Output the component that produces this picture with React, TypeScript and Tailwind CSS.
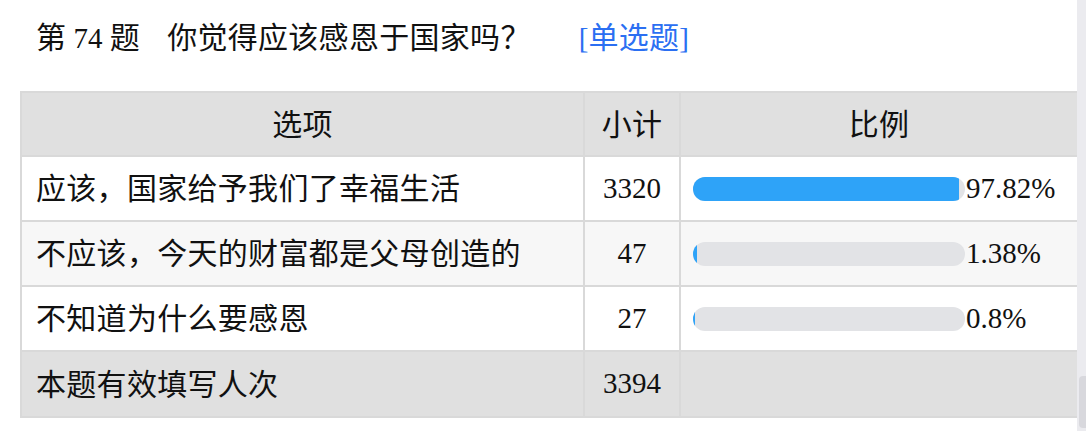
const rows = [
  { label: "应该，国家给予我们了幸福生活", count: 3320, pct: 97.82, bg: "bg-white" },
  { label: "不应该，今天的财富都是父母创造的", count: 47, pct: 1.38, bg: "bg-[#f7f7f7]" },
  { label: "不知道为什么要感恩", count: 27, pct: 0.8, bg: "bg-white" },
];

const font = "font-['Liberation_Serif','Noto_Sans_CJK_SC',serif]";
// CJK glyphs run a bit wider than the Latin ones in the original
const cjk = "text-[30px] tracking-[0.3px]";

export default function App() {
  return (
    <div className={`flex h-[431px] w-[1086px] overflow-hidden bg-white text-[#111] ${font}`}>
      <div className="flex-1 pl-5">
        <div className="flex h-[91px] items-start pl-4 pt-[20px] text-[29px] leading-[36px]">
          <span>
            <span className={cjk}>第</span> 74 <span className={cjk}>题</span>
          </span>
          <span className={`ml-[27px] ${cjk}`}>你觉得应该感恩于国家吗？</span>
          <span className="ml-[48px] text-[#2b6ff2]">
            [<span className={cjk}>单选题</span>]
          </span>
        </div>

        <div className="border-l-2 border-t-2 border-[#d9d9d9] text-[29px]">
          <div className="flex h-[64px] bg-[#e0e0e0]">
            <div className={`flex w-[563px] items-center justify-center border-b-2 border-r-2 border-[#d9d9d9] ${cjk}`}>
              选项
            </div>
            <div className={`flex w-[96px] items-center justify-center border-b-2 border-r-2 border-[#d9d9d9] ${cjk}`}>
              小计
            </div>
            <div className={`flex flex-1 items-center justify-center border-b-2 border-[#d9d9d9] ${cjk}`}>
              比例
            </div>
          </div>

          {rows.map((r) => (
            <div key={r.label} className={`flex h-[65px] ${r.bg}`}>
              <div className={`flex w-[563px] items-center border-b-2 border-r-2 border-[#d9d9d9] pl-[14px] ${cjk}`}>
                {r.label}
              </div>
              <div className="flex w-[96px] items-center justify-center border-b-2 border-r-2 border-[#d9d9d9]">
                {r.count}
              </div>
              <div className="flex flex-1 items-center border-b-2 border-[#d9d9d9] pl-[12px]">
                <div className="h-[24px] w-[272px] overflow-hidden rounded-full bg-[#e2e3e6]">
                  <div className="h-full bg-[#2ea3f8]" style={{ width: `${r.pct}%` }} />
                </div>
                <span className="ml-[1px]">{r.pct}%</span>
              </div>
            </div>
          ))}

          <div className="flex h-[66px] bg-[#e0e0e0]">
            <div className={`flex w-[563px] items-center border-b-2 border-r-2 border-[#d9d9d9] pl-[14px] ${cjk}`}>
              本题有效填写人次
            </div>
            <div className="flex w-[96px] items-center justify-center border-b-2 border-r-2 border-[#d9d9d9]">
              3394
            </div>
            <div className="flex-1 border-b-2 border-[#d9d9d9]" />
          </div>
        </div>
      </div>

      <div className="flex w-[9px] flex-col bg-[#ebebef] pt-[376px]">
        <div className="ml-[2px] h-[52px] w-[7px] rounded-l-[4px] bg-[#d8d8dd]" />
      </div>
    </div>
  );
}
